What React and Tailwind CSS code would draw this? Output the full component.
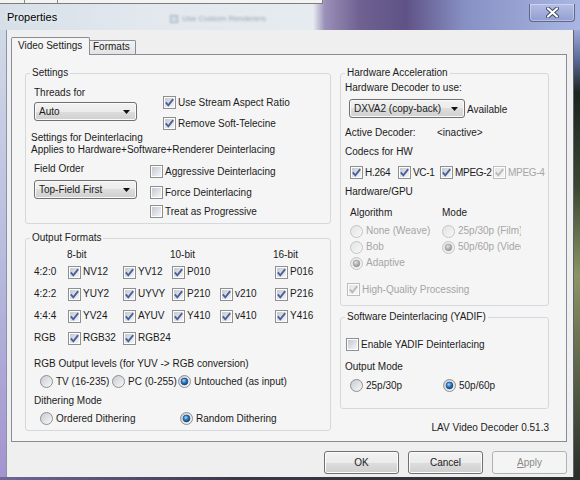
import React from "react";

// Win7 style "Properties" dialog (LAV Video Decoder)

function Defs() {
  return (
    <svg className="absolute w-0 h-0" aria-hidden="true">
      <defs>
        <linearGradient id="cbf" x1="0" y1="0" x2="1" y2="1">
          <stop offset="0" stopColor="#c3c9d2" />
          <stop offset="1" stopColor="#f4f5f7" />
        </linearGradient>
        <linearGradient id="cbd" x1="0" y1="0" x2="1" y2="1">
          <stop offset="0" stopColor="#e4e4e4" />
          <stop offset="1" stopColor="#f6f6f6" />
        </linearGradient>
        <linearGradient id="rdf" x1="0" y1="0" x2="1" y2="1">
          <stop offset="0" stopColor="#c4c8ce" />
          <stop offset="1" stopColor="#fbfbfb" />
        </linearGradient>
        <linearGradient id="rdd" x1="0" y1="0" x2="1" y2="1">
          <stop offset="0" stopColor="#e2e2e2" />
          <stop offset="1" stopColor="#f8f8f8" />
        </linearGradient>
        <radialGradient id="rdo" cx="0.4" cy="0.35" r="0.75">
          <stop offset="0" stopColor="#a6dcf8" />
          <stop offset="0.45" stopColor="#2c7cc4" />
          <stop offset="1" stopColor="#0c3666" />
        </radialGradient>
        <radialGradient id="rdg" cx="0.4" cy="0.35" r="0.75">
          <stop offset="0" stopColor="#e6e6e6" />
          <stop offset="0.5" stopColor="#b0b0b0" />
          <stop offset="1" stopColor="#8c8c8c" />
        </radialGradient>
      </defs>
    </svg>
  );
}

function Box({ checked, disabled }) {
  return (
    <svg width="13" height="13" viewBox="0 0 13 13" className="shrink-0">
      <rect x="0.5" y="0.5" width="12" height="12" fill="#fdfdfd" stroke={disabled ? "#bdbdbd" : "#8e8f8f"} />
      <rect x="2" y="2" width="9" height="9" fill={disabled ? "url(#cbd)" : "url(#cbf)"} />
      {checked && (
        <path
          d="M2.8 6.4 5.3 9.3 10.2 3.1"
          fill="none"
          stroke={disabled ? "#b9b9b9" : "#4a5e97"}
          strokeWidth="1.8"
        />
      )}
    </svg>
  );
}

function Dot({ on, disabled }) {
  return (
    <svg width="13" height="13" viewBox="0 0 13 13" className="shrink-0">
      <circle cx="6.5" cy="6.5" r="6" fill={disabled ? "url(#rdd)" : "url(#rdf)"} stroke={disabled ? "#c4c4c4" : "#8e8f8f"} />
      {on && (
        <circle
          cx="6.5"
          cy="6.5"
          r="3.4"
          fill={disabled ? "url(#rdg)" : "url(#rdo)"}
          stroke={disabled ? "#a0a0a0" : "#0f3b6e"}
          strokeWidth="0.6"
        />
      )}
    </svg>
  );
}

function Check({ label, checked, disabled, className = "" }) {
  return (
    <div className={`flex items-center h-[13px] gap-[2px] shrink-0 whitespace-nowrap ${className}`}>
      <Box checked={checked} disabled={disabled} />
      <span className={disabled ? "text-[#a5a5a5]" : ""}>{label}</span>
    </div>
  );
}

function Opt({ label, on, disabled, className = "" }) {
  return (
    <div className={`flex items-center h-[13px] gap-[3px] shrink-0 whitespace-nowrap ${className}`}>
      <Dot on={on} disabled={disabled} />
      <span className={disabled ? "text-[#a5a5a5]" : ""}>{label}</span>
    </div>
  );
}

function Select({ value, className = "" }) {
  return (
    <div
      className={`flex items-center justify-between shrink-0 h-[19px] pl-[4px] pr-[6px] border border-[#707070] rounded-[3px] bg-[linear-gradient(#f2f2f2_0%,#ebebeb_50%,#dddddd_50%,#cfcfcf_100%)] shadow-[inset_0_0_0_1px_#fafafa] ${className}`}
    >
      <span>{value}</span>
      <svg width="7" height="4" viewBox="0 0 7 4">
        <path d="M0 0h7L3.5 4z" fill="#111" />
      </svg>
    </div>
  );
}

function Group({ title, className = "", children }) {
  return (
    <fieldset className={`border border-[#d5d9dd] rounded-[3px] ${className}`}>
      <legend className="ml-[4px] px-[2px] leading-[12px]">{title}</legend>
      {children}
    </fieldset>
  );
}

function Btn({ children, disabled }) {
  return (
    <div
      className={`w-[75px] h-[23px] flex items-center justify-center rounded-[3px] border ${
        disabled
          ? "border-[#adb2b5] bg-[#f4f4f4] text-[#8a8a8a]"
          : "border-[#707070] bg-[linear-gradient(#f2f2f2_0%,#ebebeb_50%,#dddddd_50%,#cfcfcf_100%)] shadow-[inset_0_0_0_1px_#fcfcfc]"
      }`}
    >
      {children}
    </div>
  );
}

const formats = [
  ["4:2:0", ["NV12", "YV12", "P010", null, "P016"]],
  ["4:2:2", ["YUY2", "UYVY", "P210", "v210", "P216"]],
  ["4:4:4", ["YV24", "AYUV", "Y410", "v410", "Y416"]],
  ["RGB", ["RGB32", "RGB24", null, null, null]],
];

function SettingsGroup() {
  return (
    <Group title="Settings" className="w-[306px] h-[157px]">
      <div className="flex mt-[8px]">
        <div className="ml-[8px] w-[129px]">
          <div>Threads for</div>
          <Select className="mt-[3px] w-[103px]" value="Auto" />
        </div>
        <div className="mt-[9px] flex flex-col gap-[8px]">
          <Check checked label="Use Stream Aspect Ratio" />
          <Check checked label="Remove Soft-Telecine" />
        </div>
      </div>
      <div className="ml-[5px] mt-[2px]">Settings for Deinterlacing</div>
      <div className="ml-[5px] whitespace-nowrap">Applies to Hardware+Software+Renderer Deinterlacing</div>
      <div className="flex mt-[7px]">
        <div className="ml-[8px] w-[116px]">
          <div>Field Order</div>
          <Select className="mt-[5px] w-[103px]" value="Top-Field First" />
        </div>
        <div className="mt-[2px] flex flex-col">
          <Check label="Aggressive Deinterlacing" />
          <Check className="mt-[8px]" label="Force Deinterlacing" />
          <Check className="mt-[6px]" label="Treat as Progressive" />
        </div>
      </div>
    </Group>
  );
}

function OutputGroup() {
  return (
    <Group title="Output Formats" className="w-[306px] h-[199px] mt-[8px]">
      <div className="mt-[5px] ml-[8px] grid grid-cols-[34px_55px_49px_48px_55px_1fr] grid-rows-[12px_22px_22px_22px_22px] items-center">
        <span />
        <span className="-ml-px">8-bit</span>
        <span />
        <span className="-ml-[2px]">10-bit</span>
        <span />
        <span className="-ml-[2px]">16-bit</span>
        {formats.map(([name, items]) => (
          <React.Fragment key={name}>
            <span>{name}</span>
            {items.map((it, i) => (it ? <Check key={i} checked label={it} /> : <span key={i} />))}
          </React.Fragment>
        ))}
      </div>
      <div className="ml-[8px] mt-[9px] whitespace-nowrap">RGB Output levels (for YUV -&gt; RGB conversion)</div>
      <div className="flex ml-[14px] mt-[5px]">
        <Opt className="w-[72px]" label="TV (16-235)" />
        <Opt className="w-[66px]" label="PC (0-255)" />
        <Opt on label="Untouched (as input)" />
      </div>
      <div className="ml-[8px] mt-[7px]">Dithering Mode</div>
      <div className="flex ml-[14px] mt-[5px]">
        <Opt className="w-[140px]" label="Ordered Dithering" />
        <Opt on label="Random Dithering" />
      </div>
    </Group>
  );
}

function HardwareGroup() {
  return (
    <Group title="Hardware Acceleration" className="w-[209px] h-[239px]">
      <div className="ml-[4px] mt-[3px]">Hardware Decoder to use:</div>
      <div className="flex items-center mt-[5px] ml-[8px]">
        <Select className="w-[116px]" value="DXVA2 (copy-back)" />
        <span className="ml-[2px] mt-[3px]">Available</span>
      </div>
      <div className="flex ml-[4px] mt-[9px]">
        <span className="w-[92px]">Active Decoder:</span>
        <span>&lt;inactive&gt;</span>
      </div>
      <div className="ml-[4px] mt-[7px]">Codecs for HW</div>
      <div className="flex ml-[9px] mt-[8px] tracking-[-0.3px]">
        <Check checked label="H.264" className="w-[48px]" />
        <Check checked label="VC-1" className="w-[42px]" />
        <Check checked label="MPEG-2" className="w-[53px]" />
        <Check checked disabled label="MPEG-4" />
      </div>
      <div className="ml-[4px] mt-[7px]">Hardware/GPU</div>
      <div className="flex ml-[9px] mt-[9px]">
        <span className="w-[92px]">Algorithm</span>
        <span>Mode</span>
      </div>
      <div className="ml-[9px] mt-[4px] grid grid-cols-[92px_79px] auto-rows-[16px] items-center">
        <Opt disabled label="None (Weave)" />
        <Opt disabled className="overflow-hidden" label="25p/30p (Film)" />
        <Opt disabled label="Bob" />
        <Opt disabled on className="overflow-hidden" label="50p/60p (Video)" />
        <Opt disabled on label="Adaptive" />
      </div>
      <Check className="ml-[6px] mt-[12px]" checked disabled label="High-Quality Processing" />
    </Group>
  );
}

function SoftwareGroup() {
  return (
    <Group title="Software Deinterlacing (YADIF)" className="w-[209px] h-[98px] mt-[5px]">
      <Check className="ml-[5px] mt-[15px]" label="Enable YADIF Deinterlacing" />
      <div className="ml-[4px] mt-[10px]">Output Mode</div>
      <div className="flex ml-[9px] mt-[6px]">
        <Opt className="w-[93px]" label="25p/30p" />
        <Opt on label="50p/60p" />
      </div>
    </Group>
  );
}

function TitleBar() {
  return (
    <div className="h-[30px] flex flex-col bg-[linear-gradient(90deg,#d6dfe8_0%,#e2e8ee_25%,#e6ebef_54%,#9b90b8_56%,#6f6191_62%,#5f5286_70%,#8790c3_80%,#a9b6e2_100%)]">
      <div className="h-[4px] flex">
        <div className="w-[323px] h-[4px] bg-[#f3f3f3] border-b border-r border-[#7d7d7d] flex">
          <span className="ml-[24px] w-[34px] h-[3px] border-x border-[#8a8a8a]" />
        </div>
      </div>
      <div className="flex items-start flex-1">
        <span className="ml-[7px] mt-[7px] text-[11px] leading-[13px] text-black [text-shadow:0_0_6px_#ffffff]">
          Properties
        </span>
        <div className="ml-[113px] mt-[10px] flex items-center gap-[4px] blur-[0.8px] opacity-70">
          <span className="w-[8px] h-[8px] border border-[#8a9aaa] bg-[#c9d6e4]" />
          <span className="text-[8px] leading-[9px] text-[#7a8896]">Use Custom Renderers</span>
        </div>
        <div className="ml-auto mr-[5px] w-[46px] h-[18px] flex items-center justify-center rounded-b-[4px] border border-t-0 border-[#5b6a8c] bg-[linear-gradient(#b9c2e6cc,#8f9ad0cc)] shadow-[inset_0_0_0_1px_#ffffff55]">
          <svg width="13" height="11" viewBox="0 0 13 11">
            <path d="M2 1.5 11 9.5M11 1.5 2 9.5" stroke="#3b4766" strokeWidth="4" strokeLinecap="round" />
            <path d="M2 1.5 11 9.5M11 1.5 2 9.5" stroke="#ffffff" strokeWidth="2.2" strokeLinecap="round" />
          </svg>
        </div>
      </div>
    </div>
  );
}

export default function App() {
  return (
    <div className="relative w-[580px] h-[480px] overflow-hidden flex flex-col font-['Liberation_Sans',Arial,sans-serif] text-[10px] leading-[12px] text-[#1b1b1b] bg-[#3a3848]">
      <Defs />
      <TitleBar />
      <div className="flex h-[447px]">
        <div className="w-[7px] border-r border-[#8a93a5] bg-[linear-gradient(#d0d9e6,#b8bcde_50%,#a394d0)]" />
        <div className="w-[566px] bg-[#efefef] flex flex-col">
          <div className="relative z-10 -mb-px h-[25px] pl-[4px] flex items-end">
            <div className="w-[79px] h-[18px] pl-[6px] pt-[2px] border-x border-t border-[#898c95] rounded-t-[2px] bg-[#f5f5f5] whitespace-nowrap">
              Video Settings
            </div>
            <div className="w-[46px] h-[14px] mb-px pl-[3px] border-r border-t border-[#898c95] rounded-tr-[2px] bg-[linear-gradient(#f3f3f3,#e3e3e3)]">
              Formats
            </div>
          </div>
          <div className="ml-[4px] w-[556px] h-[388px] border border-[#898c95] bg-[#f5f5f5] flex pl-[13px] pt-[12px]">
            <div className="w-[306px] flex flex-col">
              <SettingsGroup />
              <OutputGroup />
            </div>
            <div className="ml-[9px] w-[209px] flex flex-col">
              <HardwareGroup />
              <SoftwareGroup />
              <div className="mt-[13px] text-right whitespace-nowrap">LAV Video Decoder 0.51.3</div>
            </div>
          </div>
          <div className="ml-[4px] w-[556px] mt-[9px] flex justify-end gap-[9px]">
            <Btn>OK</Btn>
            <Btn>Cancel</Btn>
            <Btn disabled>
              <span className="underline">A</span>pply
            </Btn>
          </div>
        </div>
        <div className="w-[7px] border-l border-[#5d6470] bg-[linear-gradient(#9ea7d6_0%,#6070a0_6%,#1c2420_14%,#3a4630_35%,#8c9466_55%,#6a7050_70%,#2a2e28_100%)]" />
      </div>
      <div className="h-[3px] bg-[linear-gradient(90deg,#6f6898,#3a3848_40%,#2c2f2c)]" />
    </div>
  );
}
